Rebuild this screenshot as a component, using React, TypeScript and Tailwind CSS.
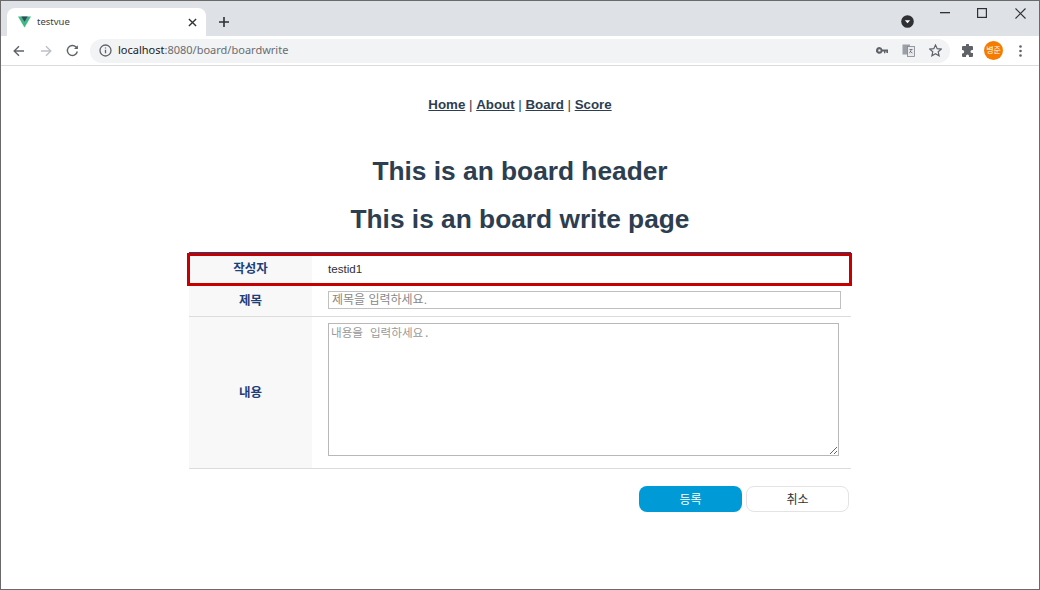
import React from "react";

const sans = "font-['Liberation_Sans','Noto_Sans_CJK_KR',sans-serif]";

function Row({ label, h, border, labelPt, children }: { label: string; h: string; border?: boolean; labelPt?: string; children: React.ReactNode }) {
  return (
    <div className={`flex ${h} ${border ? "border-b border-[#dcdcdc]" : ""}`}>
      <div className={`w-[123px] shrink-0 bg-[#f8f8f8] flex items-center justify-center text-[12.5px] font-bold text-[#1f3f7a] ${labelPt ?? ""}`}>{label}</div>
      <div className="flex-1 min-w-0 flex items-center pl-4">{children}</div>
    </div>
  );
}

export default function App() {
  return (
    <div className={`w-[1040px] h-[590px] bg-white overflow-hidden flex flex-col border-l border-t border-[#6a6a6a] border-b border-r ${sans}`}>
      {/* tab strip */}
      <div className="h-[35px] shrink-0 bg-[#dee1e6] flex items-end relative">
        <div className="ml-[6px] w-[199px] h-[28px] bg-white rounded-t-[8px] flex items-center pl-[11px] pr-[8px] text-[#3c4043]">
          <svg width="13" height="12" viewBox="0 0 14 12">
            <path d="M0 0h14L7 12z" fill="#41b883" />
            <path d="M3.600 0h6.800L7 5.800z" fill="#35495e" />
          </svg>
          <span className="ml-[6px] text-[9.5px] font-['Noto_Sans',sans-serif]">testvue</span>
          <svg width="9" height="9" viewBox="0 0 10 10" className="ml-auto mr-[1px]" stroke="#303134" strokeWidth="1.500">
            <path d="M1 1l8 8M9 1l-8 8" />
          </svg>
        </div>
        <svg width="12" height="12" viewBox="0 0 12 12" className="ml-[12px] mb-[8px]" stroke="#303134" strokeWidth="1.600">
          <path d="M6 1v10M1 6h10" />
        </svg>
        <div className="ml-auto flex items-center self-start mt-[3px] h-[18px]">
          <svg width="13" height="13" viewBox="0 0 13 13" className="mr-[25px] mt-[16px] -translate-x-[1px]">
            <circle cx="6.500" cy="6.500" r="6.300" fill="#2f3033" />
            <path d="M3.800 5.200h5.400L6.500 8.300z" fill="#fff" />
          </svg>
          <svg width="10" height="2" className="mr-[27px]"><rect width="10" height="1.300" fill="#303134" /></svg>
          <svg width="10" height="10" viewBox="0 0 10 10" className="mr-[28px]" fill="none" stroke="#303134" strokeWidth="1.200"><rect x=".6" y=".6" width="8.800" height="8.800" /></svg>
          <svg width="11" height="11" viewBox="0 0 11 11" className="mr-[13px]" stroke="#303134" strokeWidth="1.100"><path d="M.5.5l10 10M10.500.5l-10 10" /></svg>
        </div>
      </div>
      {/* toolbar */}
      <div className="h-[30px] shrink-0 bg-white border-b border-[#dadce0] flex items-center">
        <svg width="12" height="12" viewBox="0 0 12 12" className="ml-[12px]" fill="none" stroke="#5f6368" strokeWidth="1.400"><path d="M11 6H1.500M6 1.200L1.200 6 6 10.800" /></svg>
        <svg width="12" height="12" viewBox="0 0 12 12" className="ml-[15px]" fill="none" stroke="#bdc1c6" strokeWidth="1.400"><path d="M1 6h9.500M6 1.200L10.800 6 6 10.800" /></svg>
        <svg width="13" height="13" viewBox="0 0 13 13" className="ml-[14px]" fill="none" stroke="#5f6368" strokeWidth="1.400"><path d="M11.300 7.500A5 5 0 1 1 10 3L11.600 4.600" /><path d="M11.800 1.200v3.900H8" fill="#5f6368" stroke="none" /></svg>
        <div className="ml-[11px] w-[860px] h-[24px] rounded-full bg-[#f1f3f4] flex items-center pl-[9px] pr-[8px]">
          <svg width="13" height="13" viewBox="0 0 13 13" fill="none" stroke="#5f6368" strokeWidth="1.300">
            <circle cx="6.500" cy="6.500" r="5.500" />
            <path d="M6.500 5.700v3.600M6.500 3.400v1.200" />
          </svg>
          <span className="ml-[6px] text-[11px] font-['Noto_Sans',sans-serif] text-[#6a6d71]"><span className="text-[#202124]">localhost</span>:8080/board/boardwrite</span>
          <svg width="12" height="7" viewBox="0 0 12 7" className="ml-auto" fill="#5f6368"><path d="M3.400 0a3.400 3.400 0 1 0 3.100 4.600H8v1.600h1.400V4.600h1V6H12V2.600H6.400A3.400 3.400 0 0 0 3.400 0zm0 2.200a1.200 1.200 0 1 1 0 2.400 1.200 1.200 0 0 1 0-2.400z" /></svg>
          <svg width="13" height="13" viewBox="0 0 13 13" className="ml-[14px]">
            <rect x="0.500" y="0.500" width="7.500" height="10" fill="#9aa0a6" />
            <rect x="5.500" y="2.500" width="7" height="10" fill="#e8eaed" stroke="#80868b" strokeWidth=".8" />
            <path d="M7.500 5.500h3M9 5.500c0 2-1 3-1.800 3.500M8 7c.6 1 1.500 1.700 2.400 2" stroke="#5f6368" strokeWidth=".8" fill="none" />
          </svg>
          <svg width="13" height="13" viewBox="0 0 13 13" className="ml-[14px]" fill="none" stroke="#5f6368" strokeWidth="1.200"><path d="M6.500 1l1.700 3.700 4 .4-3 2.700.9 4-3.600-2.100-3.600 2.100.9-4-3-2.700 4-.4z" /></svg>
        </div>
        <svg width="13" height="13" viewBox="0 0 13 13" className="ml-[11px]" fill="#5f6368"><path d="M5 1a1.500 1.500 0 0 1 3 0v1h3a1 1 0 0 1 1 1v3h-1a1.500 1.500 0 0 0 0 3h1v3a1 1 0 0 1-1 1H8v-1a1.500 1.500 0 0 0-3 0v1H2a1 1 0 0 1-1-1V9.500h.5a1.700 1.700 0 0 0 0-3.400H1V3a1 1 0 0 1 1-1h3z" /></svg>
        <div className="ml-[10px] w-[19px] h-[19px] rounded-full bg-[#f57c00] text-white text-[8px] flex items-center justify-center">병준</div>
        <svg width="3" height="12" viewBox="0 0 3 12" className="ml-[16px]" fill="#5f6368"><circle cx="1.500" cy="1.500" r="1.300" /><circle cx="1.500" cy="6" r="1.300" /><circle cx="1.500" cy="10.500" r="1.300" /></svg>
      </div>
      {/* page */}
      <div className="flex-1 flex flex-col items-center text-[#2c3e50]">
        <nav className="mt-[30px] h-[17px] leading-[17px] text-[13.300px]">
          <a className="font-bold underline">Home</a> | <a className="font-bold underline">About</a> | <a className="font-bold underline">Board</a> | <a className="font-bold underline">Score</a>
        </nav>
        <h1 className="mt-[42px] h-[32px] leading-[32px] text-[26.300px] font-bold">This is an board header</h1>
        <h1 className="mt-[16px] h-[32px] leading-[32px] text-[26.300px] font-bold">This is an board write page</h1>
        <div className="relative mt-[17px] w-[662px] border-t-2 border-[#2a3f7a] text-[#2c3038]">
          <div className="absolute -left-[2px] -right-[1px] -top-[1px] h-[33px] border-[3px] border-[#c40000] z-10" />
          <Row label="작성자" h="h-[31px]"><span className="text-[11.600px] mb-[2px]">testid1</span></Row>
          <Row label="제목" h="h-[32px]" border labelPt="pt-[2px]">
            <input readOnly placeholder="제목을 입력하세요." className="w-[513px] h-[18px] mb-[2px] border border-[#c0c0c0] px-[3px] text-[12px] placeholder:text-[#888] outline-none" />
          </Row>
          <Row label="내용" h="h-[152px]" border labelPt="pt-[2px]">
            <textarea readOnly placeholder="내용을 입력하세요." className="w-[511px] h-[133px] mb-[6px] border border-[#b8b8b8] px-[2px] py-[1px] text-[11.600px] font-['Liberation_Mono','Noto_Sans_CJK_KR',monospace] placeholder:text-[#999] outline-none" />
          </Row>
        </div>
        <div className="mt-[17px] w-[662px] flex justify-end gap-[4px] pr-[2px] text-[12px]">
          <button className="w-[103px] h-[26px] rounded-[8px] bg-[#009ad6] text-white pt-[1px]">등록</button>
          <button className="w-[103px] h-[26px] rounded-[8px] bg-white border border-[#e3e3e3] text-[#333] pt-[1px]">취소</button>
        </div>
      </div>
    </div>
  );
}
